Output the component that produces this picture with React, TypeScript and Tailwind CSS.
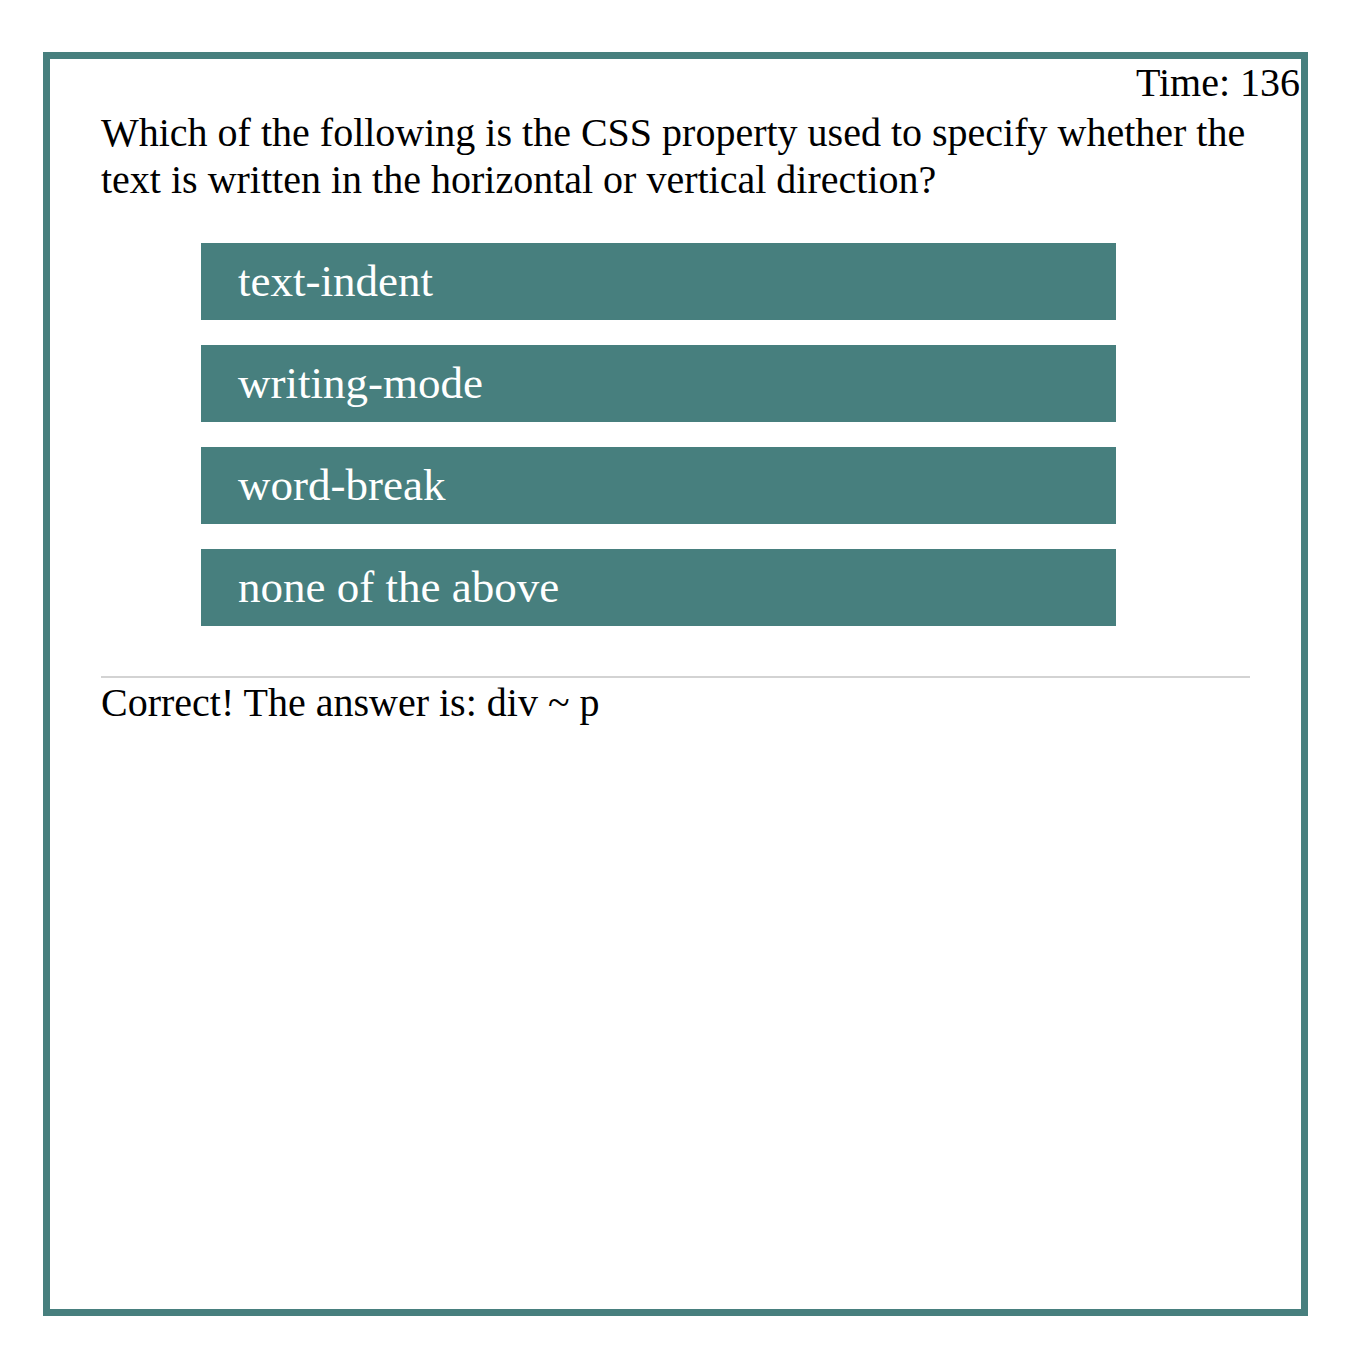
const options = ["text-indent", "writing-mode", "word-break", "none of the above"];

export default function App() {
  return (
    <div className="min-h-screen bg-white pt-[52px] pl-[43px] font-['Liberation_Serif',serif] text-black">
      <div className="w-[1265px] h-[1264px] border-[7px] border-[#477f7e] flex flex-col">
        <div className="text-right text-[40px] leading-[44px] pt-[2px] pr-[1px]">Time: 136</div>
        <div className="px-[51px]">
          <p className="text-[40px] leading-[47px] mt-[4px]">
            Which of the following is the CSS property used to specify whether the text is written in the horizontal or vertical direction?
          </p>
          <div className="flex flex-col gap-[25px] mt-[40px] pl-[100px]">
            {options.map((o) => (
              <button
                key={o}
                className="w-[915px] h-[77px] bg-[#477f7e] text-white text-left pl-[37px] text-[45px] leading-none"
              >
                {o}
              </button>
            ))}
          </div>
          <hr className="mt-[50px] border-0 h-[2px] bg-[#d3d3d3]" />
          <p className="text-[40px] leading-[46px] mt-[2px]">Correct! The answer is: div ~ p</p>
        </div>
      </div>
    </div>
  );
}
